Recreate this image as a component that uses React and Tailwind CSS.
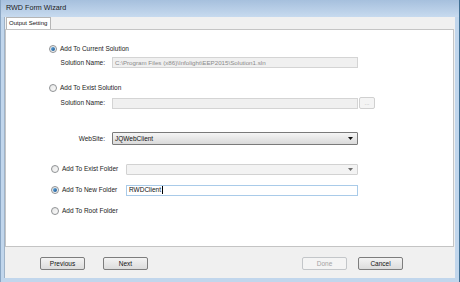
import React from 'react';

const Radio = ({ checked }) => (
    <div className="w-[8px] h-[8px] rounded-full border border-[#8f9294] bg-gradient-to-br from-[#e6e6e6] to-[#fbfbfb] flex items-center justify-center shrink-0">
        {checked && <div className="w-[4px] h-[4px] rounded-full bg-gradient-to-br from-[#6fb3e6] to-[#0d4f8c]" />}
    </div>
);

const Btn = ({ children, disabled }) => (
    <div
        className={`w-[45px] h-[13px] rounded-[2px] border flex items-center justify-center text-[6.5px] ${
            disabled
                ? 'border-[#c3c6c9] bg-[#f4f4f4] text-[#a3a3a3]'
                : 'border-[#7d7d7d] bg-gradient-to-b from-[#f3f3f3] to-[#dcdcdc] text-[#111]'
        }`}
    >
        {children}
    </div>
);

export default function App() {
    return (
        <div className="w-[460px] h-[282px] bg-[#c1d6ec] border-l border-[#8aa6c4] border-r border-r-[#3f6f93] flex flex-col overflow-hidden font-['Liberation_Sans',Arial,sans-serif]">
            {/* Title bar */}
            <div className="h-[17px] shrink-0 bg-gradient-to-b from-[#a6c0dd] to-[#c7daef] flex items-center pl-[5px] text-[7.2px] text-[#1b1b1b]">
                RWD Form Wizard
            </div>

            {/* Client area */}
            <div className="flex-1 ml-[3px] mr-[4px] mb-[4px] bg-[#f0f0f0] flex flex-col border-l border-[#9fb3c8]">
                {/* Tab strip */}
                <div className="h-[12px] shrink-0 flex items-end">
                    <div className="ml-[1px] w-[45px] h-[12px] bg-white border border-b-0 border-[#b5b5b5] text-[6px] pl-[2px] pt-[2px] leading-none text-[#111]">
                        Output Setting
                    </div>
                </div>

                {/* Tab panel */}
                <div className="h-[218px] shrink-0 bg-white border border-[#c4c4c4] mr-[1px] flex flex-col text-[6.5px] text-[#1a1a1a]">
                    <div className="mt-[13px] h-[12px] flex items-center">
                        <div className="ml-[43px] mr-[3px]"><Radio checked /></div>
                        <span>Add To Current Solution</span>
                    </div>
                    <div className="mt-[2px] h-[11px] flex items-center">
                        <div className="w-[99px] text-right">Solution Name:</div>
                        <div className="ml-[7px] w-[246px] h-[11px] border border-[#d4d4d4] bg-[#f0f0f0] text-[#8b8b8b] flex items-center pl-[2px] text-[6.2px]">
                            C:\Program Files (x86)\Infolight\EEP2015\Solution1.sln
                        </div>
                    </div>

                    <div className="mt-[14px] h-[12px] flex items-center">
                        <div className="ml-[43px] mr-[3px]"><Radio /></div>
                        <span>Add To Exist Solution</span>
                    </div>
                    <div className="mt-[3px] h-[12px] flex items-center">
                        <div className="w-[99px] text-right">Solution Name:</div>
                        <div className="ml-[7px] w-[246px] h-[11px] border border-[#d4d4d4] bg-[#f0f0f0]" />
                        <div className="ml-[1px] w-[16px] h-[12px] rounded-[2px] border border-[#d0d0d0] bg-[#f4f4f4] text-[#b0b0b0] text-[6px] flex items-center justify-center leading-none">...</div>
                    </div>

                    <div className="mt-[23px] h-[13px] flex items-center">
                        <div className="w-[99px] text-right">WebSite:</div>
                        <div className="ml-[7px] w-[246px] h-[13px] border border-[#7a7a7a] rounded-[1px] bg-gradient-to-b from-[#f5f5f5] to-[#dadada] flex items-center pl-[2px] pr-[4px] text-[#111]">
                            <span className="flex-1">JQWebClient</span>
                            <svg width="5" height="3" viewBox="0 0 5 3"><path d="M0 0H5L2.5 3Z" fill="#111" /></svg>
                        </div>
                    </div>

                    <div className="mt-[18px] h-[12px] flex items-center">
                        <div className="w-[120px] flex items-center pl-[45px]">
                            <div className="mr-[3px]"><Radio /></div>
                            <span>Add To Exist Folder</span>
                        </div>
                        <div className="w-[232px] h-[11px] border border-[#d2d2d2] rounded-[1px] bg-[#f3f3f3] flex items-center justify-end pr-[4px]">
                            <svg width="5" height="3" viewBox="0 0 5 3"><path d="M0 0H5L2.5 3Z" fill="#6d6d6d" /></svg>
                        </div>
                    </div>

                    <div className="mt-[9px] h-[12px] flex items-center">
                        <div className="w-[120px] flex items-center pl-[45px]">
                            <div className="mr-[3px]"><Radio checked /></div>
                            <span>Add To New Folder</span>
                        </div>
                        <div className="w-[232px] h-[11px] border border-[#a9cbe9] bg-white flex items-center pl-[2px] text-[#111]">
                            RWDClient<span className="w-px h-[8px] bg-black ml-[1px]" />
                        </div>
                    </div>

                    <div className="mt-[9px] h-[12px] flex items-center">
                        <div className="w-[120px] flex items-center pl-[45px]">
                            <div className="mr-[3px]"><Radio /></div>
                            <span>Add To Root Folder</span>
                        </div>
                    </div>
                </div>

                {/* Button bar */}
                <div className="flex-1 flex items-start pt-[10px]">
                    <div className="ml-[35px]"><Btn>Previous</Btn></div>
                    <div className="ml-[18px]"><Btn>Next</Btn></div>
                    <div className="flex-1" />
                    <Btn disabled>Done</Btn>
                    <div className="ml-[11px] mr-[52px]"><Btn>Cancel</Btn></div>
                </div>
            </div>
        </div>
    );
}
